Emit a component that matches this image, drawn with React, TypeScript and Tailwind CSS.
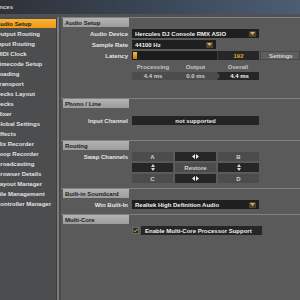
import React from 'react';

const sidebarItems = [
  'Audio Setup',
  'Output Routing',
  'Input Routing',
  'MIDI Clock',
  'Timecode Setup',
  'Loading',
  'Transport',
  'Decks Layout',
  'Decks',
  'Mixer',
  'Global Settings',
  'Effects',
  'Mix Recorder',
  'Loop Recorder',
  'Broadcasting',
  'Browser Details',
  'Layout Manager',
  'File Management',
  'Controller Manager',
];

const Arrow = () => (
  <span className="flex h-[6px] w-[7px] items-center justify-center rounded-[1px] bg-[#4a4536]">
    <svg width="5" height="3" viewBox="0 0 5 3">
      <path d="M0 0h5L2.5 3z" fill="#e0b540" />
    </svg>
  </span>
);

const SectionHeader = ({ title }: { title: string }) => (
  <div className="border-t border-[#828282]">
    <div className="ml-[2px] flex h-[9px] w-[66px] items-center bg-gradient-to-b from-[#b4b4b4] to-[#9c9c9c] pl-[2px] text-[#1c1c1c]">
      {title}
    </div>
  </div>
);

const Row = ({ label, children, className = '' }: { label: string; children?: React.ReactNode; className?: string }) => (
  <div className={`flex h-[9px] items-center ${className}`}>
    <div className="w-[67px] pr-[0px] text-right text-[#e6e6e6]">{label}</div>
    <div className="ml-[4px] flex h-full items-center">{children}</div>
  </div>
);

const Swap = () => (
  <svg width="7" height="5" viewBox="0 0 7 5">
    <path d="M0 2.5L3 0v5z" fill="#e8e8e8" />
    <path d="M7 2.5L4 0v5z" fill="#e8e8e8" />
  </svg>
);

const UpDown = () => (
  <svg width="4" height="7" viewBox="0 0 4 7">
    <path d="M2 0L4 3H0z" fill="#d8d8d8" />
    <path d="M2 7L4 4H0z" fill="#d8d8d8" />
  </svg>
);

export default function App() {
  return (
    <div
      className="flex h-[300px] w-[300px] flex-col overflow-hidden bg-[#555] text-[6px] font-bold leading-none"
      style={{ fontFamily: '"Liberation Sans", Arial, sans-serif' }}
    >
      {/* title bar */}
      <div className="flex h-[14px] items-center bg-gradient-to-r from-[#2e3238] via-[#3a4656] to-[#4c5d74]">
        <div className="flex w-[13px] justify-end whitespace-nowrap text-[#d0d0d0]">Preferences</div>
      </div>
      <div className="h-[3px] bg-[#4f5152]" />

      <div className="flex flex-1">
        {/* sidebar */}
        <div className="w-[65px] bg-[#4b4d4e] pt-[2px]">
          {sidebarItems.map((item, i) => (
            <div
              key={item}
              className={`mb-[1px] flex h-[9px] items-center whitespace-nowrap ${
                i === 0 ? 'bg-gradient-to-b from-[#f9b233] to-[#ee9a14] text-[#1a1a1a]' : 'text-[#e2e2e2]'
              }`}
            >
              <span className="ml-[-4px]">{item}</span>
            </div>
          ))}
        </div>

        {/* separator */}
        <div className="flex w-[5px]">
          <div className="w-[1px] bg-[#3e3e3e]" />
          <div className="w-[2px] bg-[#7c7c7c]" />
          <div className="w-[2px] bg-[#4a4a4a]" />
        </div>

        {/* main */}
        <div className="flex-1 bg-[#5a5a5a]">
          <SectionHeader title="Audio Setup" />
          <Row label="Audio Device" className="mt-[2px]">
            <div className="flex h-[9px] w-[127px] items-center justify-between bg-[#1f1f1f] pl-[3px] pr-[3px] text-[#f0f0f0]">
              <span>Hercules DJ Console RMX ASIO</span>
              <Arrow />
            </div>
          </Row>
          <Row label="Sample Rate" className="mt-[2px]">
            <div className="flex h-[9px] w-[84px] items-center justify-between bg-[#1f1f1f] pl-[3px] pr-[3px] text-[#f0f0f0]">
              <span>44100 Hz</span>
              <Arrow />
            </div>
          </Row>
          <Row label="Latency" className="mt-[2px]">
            <div className="flex h-[9px] w-[85px] items-center bg-[#1c1c1c] pl-[1px]">
              <div className="h-[7px] w-[4px] bg-gradient-to-b from-[#f8c048] to-[#c07a10]" />
            </div>
            <div className="flex h-[9px] w-[42px] items-center justify-center border-l border-[#3a3a3a] bg-[#262626] text-[#e0a828]">
              192
            </div>
            <div className="ml-[1px] flex h-[9px] w-[40px] items-center border border-[#4a4a4a] bg-[#5e5e5e] pl-[8px] text-[#d6d6d6]">
              Settings
            </div>
          </Row>
          <Row label="" className="mt-[2px]">
            <div className="flex text-[#c4c4c4]">
              <div className="w-[42px] text-center">Processing</div>
              <div className="w-[43px] text-center">Output</div>
              <div className="w-[42px] text-center">Overall</div>
            </div>
          </Row>
          <Row label="" className="mt-[0px]">
            <div className="flex h-[8px]">
              <div className="flex w-[42px] items-center justify-center bg-[#4c4c4c] text-[#cfcfcf]">4.4 ms</div>
              <div className="flex w-[43px] items-center justify-center bg-[#4c4c4c] text-[#cfcfcf]">0.0 ms</div>
              <div className="relative flex w-[42px] items-center justify-center bg-[#262626] pl-[3px] text-[#f4f4f4]">
                <svg className="absolute left-0 top-0" width="3" height="8" viewBox="0 0 3 8">
                  <path d="M0 0l3 4-3 4z" fill="#4c4c4c" />
                </svg>
                4.4 ms
              </div>
            </div>
          </Row>

          <div className="mt-[18px]">
            <SectionHeader title="Phono / Line" />
          </div>
          <Row label="Input Channel" className="mt-[8px]">
            <div className="flex h-[9px] w-[127px] items-center justify-center bg-[#242424] text-[#ececec]">
              not supported
            </div>
          </Row>

          <div className="mt-[15px]">
            <SectionHeader title="Routing" />
          </div>
          <div className="mt-[2px] flex">
            <div className="w-[67px] pt-[2px] text-right text-[#e6e6e6]">Swap Channels</div>
            <div className="ml-[4px] grid grid-cols-[41px_41px_41px] gap-x-[2px] gap-y-[2px]">
              <div className="flex h-[9px] items-center justify-center bg-[#4c4c4c] text-[#d0d0d0]">A</div>
              <div className="flex h-[9px] items-center justify-center bg-[#262626]"><Swap /></div>
              <div className="flex h-[9px] items-center justify-center bg-[#4c4c4c] text-[#d0d0d0]">B</div>
              <div className="flex h-[9px] items-center justify-center bg-[#262626]"><UpDown /></div>
              <div className="flex h-[9px] items-center justify-center bg-[#4c4c4c] text-[#d0d0d0]">Restore</div>
              <div className="flex h-[9px] items-center justify-center bg-[#262626]"><UpDown /></div>
              <div className="flex h-[9px] items-center justify-center bg-[#4c4c4c] text-[#d0d0d0]">C</div>
              <div className="flex h-[9px] items-center justify-center bg-[#262626]"><Swap /></div>
              <div className="flex h-[9px] items-center justify-center bg-[#4c4c4c] text-[#d0d0d0]">D</div>
            </div>
          </div>

          <div className="mt-[5px]">
            <SectionHeader title="Built-in Soundcard" />
          </div>
          <Row label="Win Built-In" className="mt-[2px]">
            <div className="flex h-[9px] w-[127px] items-center justify-between bg-[#1f1f1f] pl-[3px] pr-[3px] text-[#f0f0f0]">
              <span>Realtek High Definition Audio</span>
              <Arrow />
            </div>
          </Row>

          <div className="mt-[5px]">
            <SectionHeader title="Multi-Core" />
          </div>
          <Row label="" className="mt-[2px]">
            <div className="flex h-[7px] w-[7px] items-center justify-center border border-[#6a6a6a] bg-[#2a2a2a]">
              <svg width="6" height="5" viewBox="0 0 6 5">
                <path d="M0.5 2.5L2.2 4.2 5.5 0.5" stroke="#e8b838" strokeWidth="1.2" fill="none" />
              </svg>
            </div>
            <div className="ml-[2px] flex h-[9px] w-[121px] items-center bg-[#262626] pl-[4px] text-[#f0f0f0]">
              Enable Multi-Core Processor Support
            </div>
          </Row>
        </div>
      </div>
    </div>
  );
}
